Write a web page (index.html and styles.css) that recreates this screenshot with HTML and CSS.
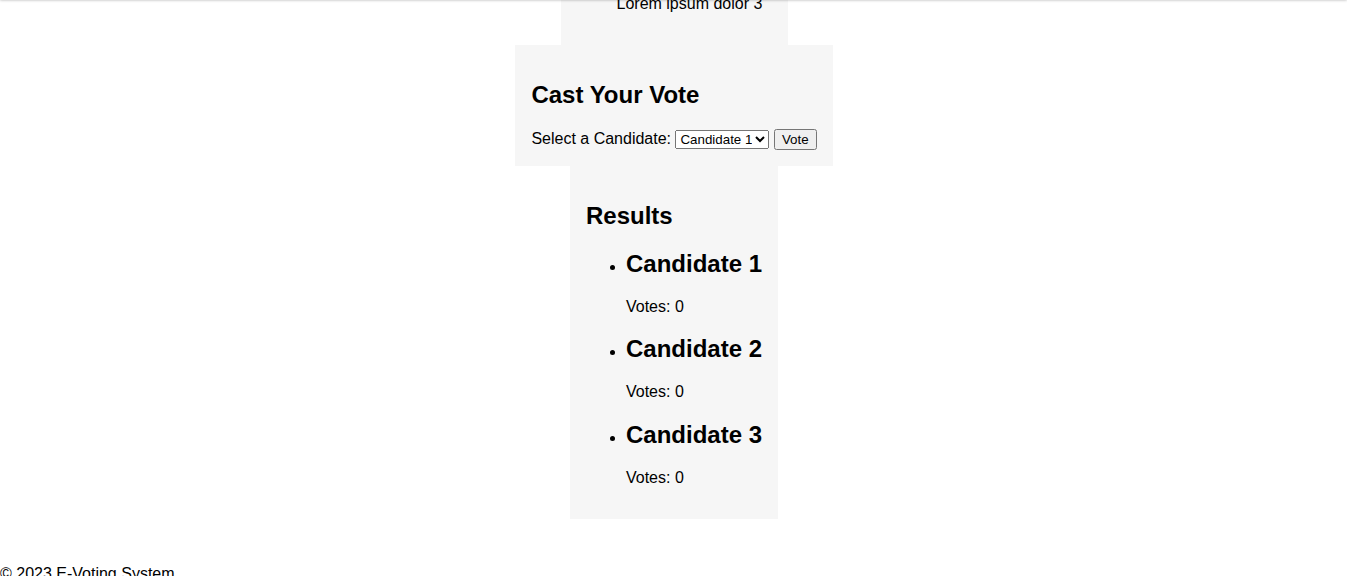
FILE: index.html
```html
<!DOCTYPE html>
<html lang="en">
<head>
<meta charset="utf-8">
<title>E-Voting System</title>
<link rel="stylesheet" href="styles.css">
</head>
<body>
<div class="topbar"></div>
<main class="main">
  <section class="card card-candidates">
    <ul class="list">
      <li class="list-item list-item-last">
        <p class="desc">Lorem ipsum dolor 3</p>
      </li>
    </ul>
  </section>
  <section class="card">
    <h2 class="title">Cast Your Vote</h2>
    <form class="vote-form">
      <label for="candidate">Select a Candidate:</label>
      <select id="candidate" class="select">
        <option>Candidate 1</option>
        <option>Candidate 2</option>
        <option>Candidate 3</option>
      </select>
      <button type="button" class="btn">Vote</button>
    </form>
  </section>
  <section class="card">
    <h2 class="title">Results</h2>
    <ul class="list">
      <li class="list-item">
        <h2 class="title">Candidate 1</h2>
        <p class="desc">Votes: 0</p>
      </li>
      <li class="list-item">
        <h2 class="title">Candidate 2</h2>
        <p class="desc">Votes: 0</p>
      </li>
      <li class="list-item">
        <h2 class="title">Candidate 3</h2>
        <p class="desc">Votes: 0</p>
      </li>
    </ul>
  </section>
</main>
<footer class="footer">
  <p class="footer-text">&copy; 2023 E-Voting System</p>
</footer>
</body>
</html>
```
FILE: styles.css
```css
html, body {
  margin: 0;
  padding: 0;
}
body {
  font-family: "Liberation Sans", Arial, sans-serif;
  font-size: 16px;
  color: #000;
  background: #fff;
}
.topbar {
  position: fixed;
  top: -10px;
  left: 0;
  right: 0;
  height: 10px;
  background: #fff;
  box-shadow: 0 0 3px rgba(0, 0, 0, 0.35);
  z-index: 5;
}
.main {
  display: flex;
  flex-direction: column;
  align-items: center;
  padding-left: 1px;
  padding-bottom: 46px;
}
.card {
  background: #f6f6f6;
  padding: 16px;
}
.card-candidates {
  padding-top: 0;
  width: 195px;
  margin-top: -5px;
}
.title {
  font-size: 24px;
  font-weight: bold;
  margin: 19.92px 0;
}
.list {
  margin: 16px 0;
  padding-left: 40px;
}
.card-candidates .list {
  margin-top: 0;
}
.list-item-last {
  list-style: none;
}
.desc {
  margin: 16px 0;
}
.list-item-last .desc {
  margin-top: 0;
}
.vote-form {
  margin: 0;
}
.footer-text {
  margin: 0;
}
```
